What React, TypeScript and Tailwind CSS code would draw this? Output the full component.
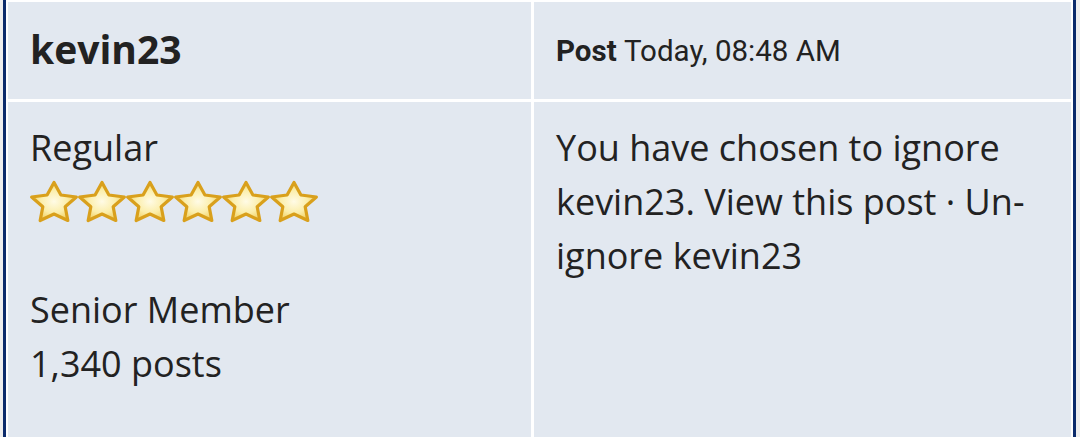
const Star = () => (
  <svg width="48" height="44" viewBox="0 0 48 44" className="shrink-0 overflow-visible">
    <defs>
      <radialGradient id="starFill" cx="50%" cy="50%" r="55%">
        <stop offset="0%" stopColor="#fffbe6" />
        <stop offset="55%" stopColor="#fbeeaa" />
        <stop offset="100%" stopColor="#efcc5a" />
      </radialGradient>
    </defs>
    <polygon
      points="24,2.5 30.92,15.01 46.37,17.01 35.18,26.74 37.83,40.49 24,34 10.17,40.49 12.82,26.74 1.63,17.01 17.08,15.01"
      fill="url(#starFill)"
      stroke="#d9a01c"
      strokeWidth="3.2"
      strokeLinejoin="round"
    />
  </svg>
);

export default function App() {
  return (
    <div className="flex h-[437px] w-[1080px] overflow-hidden bg-[#eeeeee] font-['Open_Sans',sans-serif] text-[#222222]">
      <div className="w-[3px] shrink-0" />
      <div className="w-[3px] shrink-0 bg-[#0c2b6b]" />
      <div className="grid shrink-0 grid-cols-[523px_537px] grid-rows-[97px_1fr] gap-[3px] bg-white px-[2px] pt-[2px]">
        <div className="flex items-center bg-[#e2e8f0] px-[22px] pb-[2px] text-[39px] font-bold">kevin23</div>
        <div className="flex items-center bg-[#e2e8f0] px-[22px] pt-[1px] font-['Roboto',sans-serif] text-[29.5px]">
          <span className="font-bold">Post</span>
          <span>&nbsp;Today, 08:48 AM</span>
        </div>
        <div className="bg-[#e2e8f0] px-[22px] pt-[19px] text-[36px] leading-[54px]">
          <div>Regular</div>
          <div className="flex h-[54px] items-center">
            <Star />
            <Star />
            <Star />
            <Star />
            <Star />
            <Star />
          </div>
          <div className="h-[54px]" />
          <div>Senior Member</div>
          <div>1,340 posts</div>
        </div>
        <div className="bg-[#e2e8f0] pl-[22px] pr-[30px] pt-[19px] text-[36px] leading-[54px]">
          You have chosen to ignore kevin23. View this post · Un-ignore kevin23
        </div>
      </div>
      <div className="w-[3px] shrink-0 bg-[#0c2b6b]" />
      <div className="w-[4px] shrink-0" />
    </div>
  );
}
